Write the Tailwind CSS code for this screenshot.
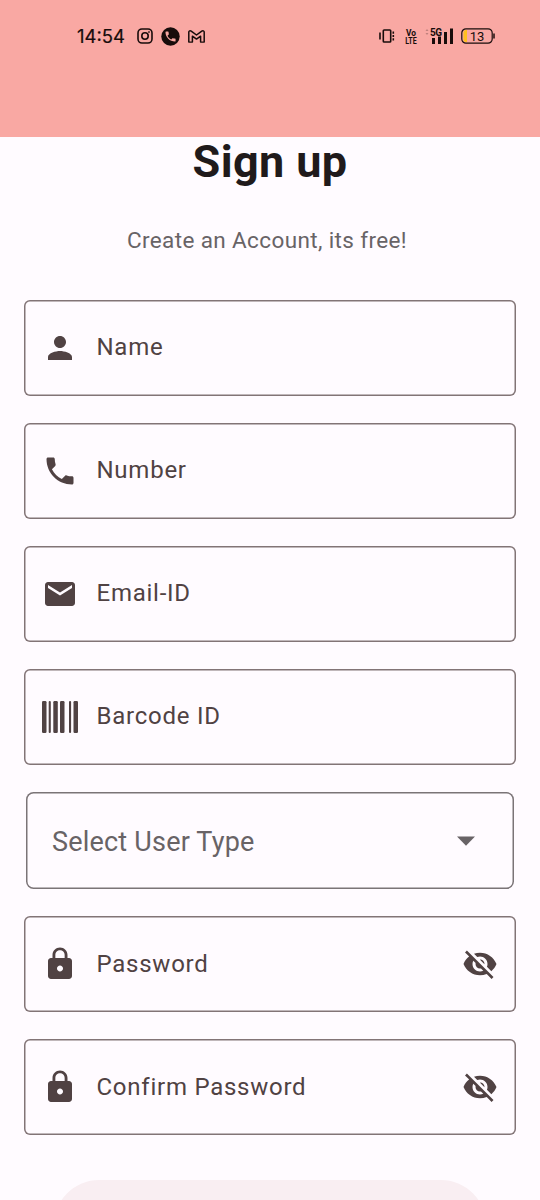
<!DOCTYPE html>
<html lang="en">
<head>
<meta charset="utf-8">
<title>Sign up</title>
<script src="https://cdn.jsdelivr.net/npm/@tailwindcss/browser@4"></script>
</head>
<body class="w-[540px] h-[1200px] overflow-hidden bg-[#fffbff] font-['Roboto',sans-serif] text-[#504243]">
<header class="h-[137px] bg-[#f9a8a3] text-[#180c0b]">
  <div class="flex items-center h-[72px] pl-[77px] pr-[45px]">
    <span class="w-[60px] pt-[2px] text-[18.5px] font-normal font-['Inter','Roboto',sans-serif] [-webkit-text-stroke:0.2px_#180c0b]">14:54</span>
    <svg class="w-[16px] h-[16px]" viewBox="0 0 16 16" fill="none" stroke="currentColor" stroke-width="1.6"><rect x="1" y="1" width="14" height="14" rx="4"/><circle cx="8" cy="8" r="3.2"/><circle cx="12" cy="4" r=".6" fill="currentColor" stroke-width=".6"/></svg>
    <svg class="w-[19px] h-[19px] ml-2" viewBox="0 0 19 19"><circle cx="9.5" cy="9.5" r="9.2" fill="currentColor"/><path transform="translate(2.8 2.8) scale(.56)" fill="#f9a8a3" d="M6.62 10.79c1.44 2.83 3.76 5.14 6.59 6.59l2.2-2.2c.27-.27.67-.36 1.02-.24 1.12.37 2.33.57 3.57.57.55 0 1 .45 1 1V20c0 .55-.45 1-1 1-9.39 0-17-7.61-17-17 0-.55.45-1 1-1h3.5c.55 0 1 .45 1 1 0 1.25.2 2.45.57 3.57.11.35.03.74-.25 1.02l-2.2 2.2z"/></svg>
    <svg class="w-[17px] h-[13px] ml-2" viewBox="0 0 17 14" preserveAspectRatio="none" fill="none" stroke="currentColor" stroke-width="1.5" stroke-linejoin="round"><path d="M.8 2.2C.8.9 2.2.4 3.2 1.2L8.5 5.400 13.800 1.200C14.800.4 16.200.9 16.200 2.200V13H12.600V6.600L8.500 9.800 4.400 6.600V13H.8Z"/></svg>
    <svg class="w-[16px] h-[14px] ml-auto" viewBox="0 0 16 14" fill="none" stroke="currentColor" stroke-width="1.6"><rect x="4.300" y="1" width="7.400" height="12" rx=".8"/><path d="M1 3.500v7M14.300 2.500v2.200M14.300 6v2M14.300 9.300v2.200"/></svg>
    <svg class="w-[12px] h-[18px] ml-[10px] overflow-visible" viewBox="0 0 12 18" fill="currentColor" font-family="Roboto" font-weight="700"><text x="1" y="8.500" font-size="9" textLength="10" lengthAdjust="spacingAndGlyphs">Vo</text><text x="0.300" y="16.500" font-size="9" textLength="11.400" lengthAdjust="spacingAndGlyphs">LTE</text></svg>
    <svg class="w-[29px] h-[18px] ml-2" viewBox="0 0 29 18" fill="currentColor"><path d="M.5 4 2 2 3.500 4ZM.5 6 2 8 3.500 6Z" opacity=".25"/><text x="5" y="8.500" font-family="Roboto" font-size="10" font-weight="700" textLength="12">5G</text><rect x="7" y="11" width="3" height="6"/><rect x="13" y="9.500" width="3" height="7.500"/><rect x="19" y="5" width="3" height="12"/><rect x="25" y="1.500" width="3" height="15.500"/></svg>
    <svg class="w-[34px] h-[16px] ml-[7px]" viewBox="0 0 34 16"><path d="M6 2v12H5a2.500 2.500 0 0 1-2.500-2.500v-7A2.500 2.500 0 0 1 5 2Z" fill="#ffc01e"/><rect x=".8" y=".8" width="30.400" height="14.400" rx="4.200" fill="none" stroke="currentColor" stroke-width="1.200"/><path d="M33 5.500v5" stroke="currentColor" stroke-width="1.500"/><text x="16" y="12.600" text-anchor="middle" font-family="Roboto" font-size="13" fill="currentColor">13</text></svg>
  </div>
</header>
<main class="flex flex-col">
  <h1 class="h-[50px] text-center text-[45px] leading-[50px] tracking-[0.375px] font-bold text-[#201a1b]">Sign up</h1>
  <p class="mt-[38px] h-[30px] pr-[6px] text-center text-[22.5px] leading-[30px] tracking-[0.375px] text-[#686366]">Create an Account, its free!</p>
  <form class="mt-[45px] flex flex-col gap-[27px] px-6 text-2xl leading-[36px] tracking-[0.75px]">
    <label class="flex items-center h-24 px-[18px] rounded-[6px] shadow-[inset_0_0_0_1.5px_#827476]">
      <svg class="size-9" viewBox="0 0 24 24" fill="currentColor"><path d="M12 12c2.210 0 4-1.790 4-4s-1.790-4-4-4-4 1.790-4 4 1.790 4 4 4zm0 2c-2.670 0-8 1.340-8 4v2h16v-2c0-2.660-5.330-4-8-4z"/></svg>
      <span class="ml-[18.5px] pb-[2px]">Name</span>
    </label>
    <label class="flex items-center h-24 px-[18px] rounded-[6px] shadow-[inset_0_0_0_1.5px_#827476]">
      <svg class="size-9" viewBox="0 0 24 24" fill="currentColor"><path d="M6.62 10.79c1.44 2.83 3.76 5.14 6.59 6.59l2.200-2.200c.27-.27.67-.36 1.020-.24 1.120.37 2.330.57 3.570.57.55 0 1 .45 1 1V20c0 .55-.45 1-1 1-9.390 0-17-7.610-17-17 0-.55.45-1 1-1h3.500c.55 0 1 .45 1 1 0 1.250.2 2.450.57 3.570.11.35.03.74-.25 1.020l-2.200 2.200z"/></svg>
      <span class="ml-[18.5px] pb-[2px]">Number</span>
    </label>
    <label class="flex items-center h-24 px-[18px] rounded-[6px] shadow-[inset_0_0_0_1.5px_#827476]">
      <svg class="size-9" viewBox="0 0 24 24" fill="currentColor"><path d="M20 4H4c-1.100 0-1.990.9-1.990 2L2 18c0 1.100.9 2 2 2h16c1.100 0 2-.9 2-2V6c0-1.100-.9-2-2-2zm0 4l-8 5-8-5V6l8 5 8-5v2z"/></svg>
      <span class="ml-[18.5px] pb-[2px]">Email-ID</span>
    </label>
    <label class="flex items-center h-24 px-[18px] rounded-[6px] shadow-[inset_0_0_0_1.5px_#827476]">
      <svg class="size-9" viewBox="0 0 36 36" fill="currentColor"><rect x="0" y="2" width="4.500" height="32" rx="1.200"/><rect x="6.700" y="2" width="2.100" height="32" rx="1"/><rect x="11.300" y="2" width="4.500" height="32" rx="1.200"/><rect x="18" y="2" width="4.500" height="32" rx="1.200"/><rect x="27" y="2" width="2.100" height="32" rx="1"/><rect x="31.500" y="2" width="4.500" height="32" rx="1.200"/></svg>
      <span class="ml-[18.5px] pb-[2px]">Barcode ID</span>
    </label>
    <div class="flex items-center justify-between h-[97px] mx-[2px] pl-[26px] pr-[30px] rounded-[7.5px] shadow-[inset_0_0_0_1.5px_#7b7477] text-[27px] tracking-[0.2px] text-[#686366]">
      <span class="pt-[2px]">Select User Type</span>
      <svg class="size-9" viewBox="0 0 24 24" fill="currentColor"><path d="M6 9l6 6.200 6-6.200z"/></svg>
    </div>
    <label class="flex items-center h-24 px-[18px] rounded-[6px] shadow-[inset_0_0_0_1.5px_#827476]">
      <svg class="size-9" viewBox="0 0 24 24" fill="currentColor"><path d="M18 8h-1V6c0-2.760-2.240-5-5-5S7 3.240 7 6v2H6c-1.100 0-2 .9-2 2v10c0 1.100.9 2 2 2h12c1.100 0 2-.9 2-2V10c0-1.100-.9-2-2-2zm-6 9c-1.100 0-2-.9-2-2s.9-2 2-2 2 .9 2 2-.9 2-2 2zm3.100-9H8.900V6c0-1.710 1.390-3.100 3.100-3.100 1.710 0 3.100 1.390 3.100 3.100v2z"/></svg>
      <span class="ml-[18.5px]">Password</span>
      <svg class="size-9 ml-auto" viewBox="0 0 24 24" fill="currentColor"><path d="M12 7c2.760 0 5 2.240 5 5 0 .65-.13 1.260-.36 1.830l2.920 2.920c1.510-1.260 2.700-2.890 3.430-4.750-1.730-4.390-6-7.500-11-7.500-1.400 0-2.740.25-3.980.7l2.160 2.160C10.740 7.130 11.350 7 12 7zM2 4.270l2.280 2.280.46.46C3.080 8.300 1.780 10.020 1 12c1.730 4.390 6 7.500 11 7.500 1.550 0 3.030-.3 4.380-.84l.42.42L19.730 22 21 20.730 3.270 3 2 4.270zM7.530 9.800l1.550 1.550c-.05.21-.08.43-.08.65 0 1.660 1.340 3 3 3 .22 0 .44-.03.65-.08l1.550 1.550c-.67.33-1.410.53-2.200.53-2.760 0-5-2.240-5-5 0-.79.2-1.530.53-2.200zm4.310-.78l3.150 3.150.02-.16c0-1.660-1.340-3-3-3l-.17.01z"/></svg>
    </label>
    <label class="flex items-center h-24 px-[18px] rounded-[6px] shadow-[inset_0_0_0_1.5px_#827476]">
      <svg class="size-9" viewBox="0 0 24 24" fill="currentColor"><path d="M18 8h-1V6c0-2.760-2.240-5-5-5S7 3.240 7 6v2H6c-1.100 0-2 .9-2 2v10c0 1.100.9 2 2 2h12c1.100 0 2-.9 2-2V10c0-1.100-.9-2-2-2zm-6 9c-1.100 0-2-.9-2-2s.9-2 2-2 2 .9 2 2-.9 2-2 2zm3.100-9H8.900V6c0-1.710 1.390-3.100 3.100-3.100 1.710 0 3.100 1.390 3.100 3.100v2z"/></svg>
      <span class="ml-[18.5px]">Confirm Password</span>
      <svg class="size-9 ml-auto" viewBox="0 0 24 24" fill="currentColor"><path d="M12 7c2.760 0 5 2.240 5 5 0 .65-.13 1.260-.36 1.830l2.920 2.920c1.510-1.260 2.700-2.890 3.430-4.750-1.730-4.390-6-7.500-11-7.500-1.400 0-2.740.25-3.980.7l2.160 2.160C10.740 7.130 11.350 7 12 7zM2 4.270l2.280 2.280.46.46C3.080 8.300 1.780 10.020 1 12c1.730 4.390 6 7.500 11 7.500 1.550 0 3.030-.3 4.380-.84l.42.42L19.730 22 21 20.730 3.270 3 2 4.270zM7.530 9.800l1.550 1.550c-.05.21-.08.43-.08.65 0 1.660 1.340 3 3 3 .22 0 .44-.03.65-.08l1.550 1.550c-.67.33-1.410.53-2.200.53-2.760 0-5-2.240-5-5 0-.79.2-1.530.53-2.200zm4.310-.78l3.150 3.150.02-.16c0-1.660-1.340-3-3-3l-.17.01z"/></svg>
    </label>
  </form>
  <div class="mt-[45px] mx-[54px] h-[20px] overflow-hidden">
    <div class="h-[90px] rounded-full bg-[#f9eef2]"></div>
  </div>
</main>
</body>
</html>
